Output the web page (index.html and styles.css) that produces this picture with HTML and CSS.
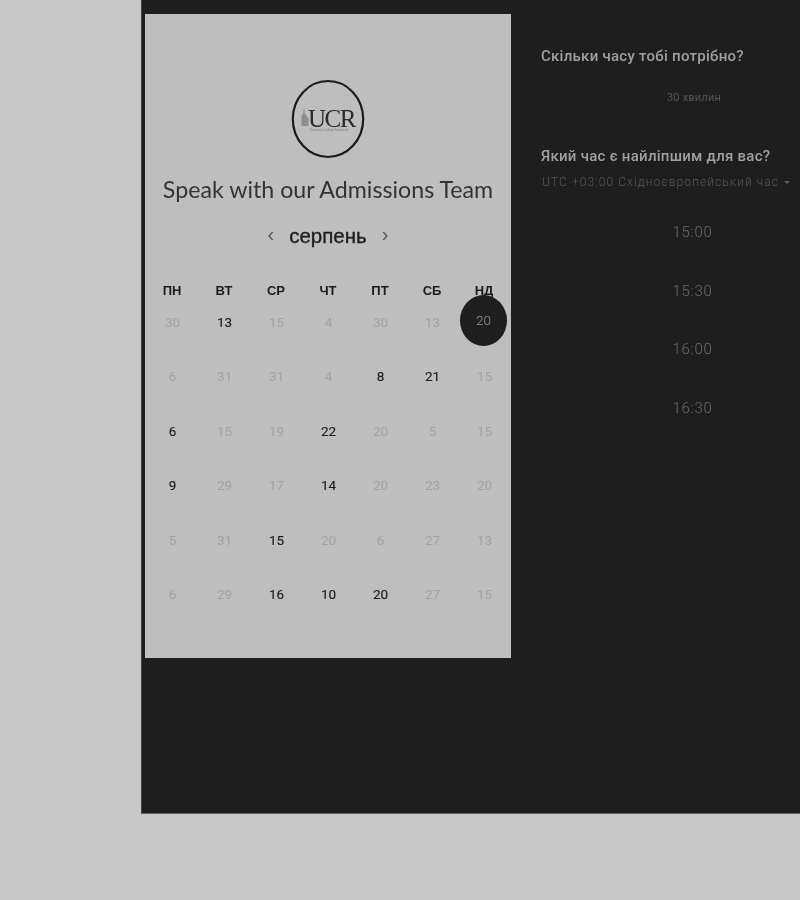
FILE: index.html
```html
<!DOCTYPE html>
<html lang="uk">
<head>
<meta charset="utf-8">
<title>Speak with our Admissions Team</title>
<link rel="stylesheet" href="styles.css">
</head>
<body>
<main class="shell">
  <section class="card">
    <svg class="logo" width="74" height="80" viewBox="0 0 74 80" role="img" aria-label="UCR">
      <ellipse cx="37" cy="40" rx="35.2" ry="38" fill="none" stroke="#1c1c1c" stroke-width="2.2"/>
      <path d="M10.500 47V36l1.500-1 1-7 1 7 1.500 1 1 3h1V47z" fill="#8e8e8e"/>
      <text x="40.500" y="48" text-anchor="middle" class="logo-mark">UCR</text>
      <text x="38" y="52" text-anchor="middle" class="logo-sub">University College Roosevelt</text>
    </svg>
    <h1 class="title">Speak with our Admissions Team</h1>
    <div class="month-nav">
      <span class="arrow">‹</span>
      <span class="month">серпень</span>
      <span class="arrow">›</span>
    </div>
    <div class="weekdays">
      <span>ПН</span><span>ВТ</span><span>СР</span><span>ЧТ</span><span>ПТ</span><span>СБ</span><span>НД</span>
    </div>
    <div class="days">
      <span>30</span><span class="on">13</span><span>15</span><span>4</span><span>30</span><span>13</span><span class="sel"><b>20</b></span>
      <span>6</span><span>31</span><span>31</span><span>4</span><span class="on">8</span><span class="on">21</span><span>15</span>
      <span class="on">6</span><span>15</span><span>19</span><span class="on">22</span><span>20</span><span>5</span><span>15</span>
      <span class="on">9</span><span>29</span><span>17</span><span class="on">14</span><span>20</span><span>23</span><span>20</span>
      <span>5</span><span>31</span><span class="on">15</span><span>20</span><span>6</span><span>27</span><span>13</span>
      <span>6</span><span>29</span><span class="on">16</span><span class="on">10</span><span class="on">20</span><span>27</span><span>15</span>
    </div>
  </section>
  <section class="panel">
    <h2 class="question">Скільки часу тобі потрібно?</h2>
    <div class="duration">30 хвилин</div>
    <h2 class="question second">Який час є найліпшим для вас?</h2>
    <div class="zone">UTC +03:00 Східноєвропейський час <i class="caret"></i></div>
    <ul class="slots">
      <li>15:00</li>
      <li>15:30</li>
      <li>16:00</li>
      <li>16:30</li>
    </ul>
  </section>
</main>
</body>
</html>
```
FILE: styles.css
```css
* { box-sizing: border-box; }
html, body { margin: 0; height: 900px; overflow: hidden; background: #c8c8c8; }
body { font-family: "Liberation Sans", Arial, sans-serif; }

.shell {
  display: flex;
  width: 659px;
  height: 814px;
  margin-left: 141px;
  padding: 14px 0 0 4px;
  background: #1e1e1e;
  border-left: 1px solid #444;
  border-bottom: 1px solid #666;
  overflow: hidden;
}

.card {
  flex: none;
  width: 366px;
  height: 644px;
  margin-left: -1px;
  padding-top: 65px;
  background: #bebebe;
  display: flex;
  flex-direction: column;
  align-items: center;
  filter: blur(0.35px);
}

.logo { display: block; }
.logo-mark { font: 25px "Liberation Serif", serif; letter-spacing: -1.5px; fill: #2a2a2a; }
.logo-sub { font: 3px "Liberation Sans", sans-serif; fill: #808080; }

.title {
  margin: 15px 0 0;
  font: 400 23.2px/30px Lato, sans-serif;
  color: #333;
  white-space: nowrap;
}

.month-nav {
  display: flex;
  align-items: center;
  gap: 15px;
  margin-top: 17px;
  height: 30px;
}
.month { font-size: 20.500px; color: #1e1e1e; -webkit-text-stroke: 0.35px #1e1e1e; }
.arrow { font-size: 20px; line-height: 20px; color: #555; margin-top: -4px; }

.weekdays, .days {
  display: grid;
  grid-template-columns: repeat(7, 52px);
  width: 364px;
  text-align: center;
}
.weekdays {
  margin-top: 32px;
  font-size: 13px;
  font-weight: 700;
  line-height: 16px;
  color: #1c1c1c;
}
.days {
  grid-auto-rows: 54.4px;
  margin-top: 8px;
  font: 13.500px/30px Roboto, sans-serif;
  color: #a2a2a2;
}
.days .on { color: #1c1c1c; -webkit-text-stroke: 0.15px #1c1c1c; }
.days span { display: block; padding-left: 1px; }
.sel { position: relative; }
.sel b {
  position: absolute;
  left: 2px;
  top: -12px;
  width: 47px;
  height: 51px;
  border-radius: 50%;
  background: #1e1e1e;
  color: #989898;
  font-weight: 300;
  line-height: 50px;
}

.panel { flex: none; width: 259px; margin-left: 30px; padding-top: 33px; filter: blur(0.3px); }
.question {
  margin: 0;
  font: 500 15px/18px Roboto, sans-serif;
  letter-spacing: 0.27px;
  color: #a0a0a0;
  white-space: nowrap;
}
.second { margin-top: 42px; }
.duration {
  margin-top: 26px;
  padding-left: 47px;
  text-align: center;
  font: 11px/14px Roboto, sans-serif;
  letter-spacing: 0.2px;
  color: #555;
}
.zone {
  margin-top: 9px;
  padding-left: 1px;
  display: flex;
  align-items: center;
  gap: 5px;
  font: 300 12px/16px Roboto, sans-serif;
  letter-spacing: 1.07px;
  color: #585858;
  white-space: nowrap;
}
.caret {
  width: 0; height: 0;
  border: 3px solid transparent;
  border-top: 3px solid #5e5e5e;
  border-bottom: 0;
}
.slots { list-style: none; margin: 13px 0 0 5px; padding: 0; }
.slots li {
  height: 58.6px;
  padding-left: 38px;
  border-left: 1px solid #212121;
  text-align: center;
  font: 300 15px/58px Roboto, sans-serif;
  letter-spacing: 0.7px;
  color: #6a6a6a;
}
```
